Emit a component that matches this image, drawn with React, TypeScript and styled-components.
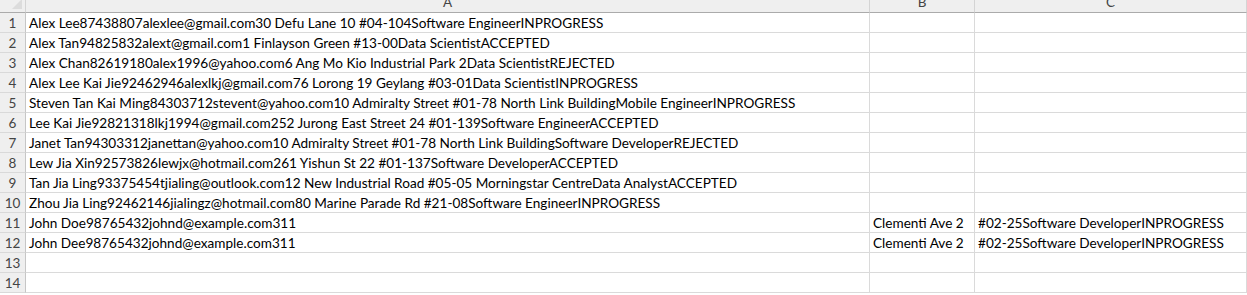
import React from "react";
import styled, { createGlobalStyle } from "styled-components";

const Global = createGlobalStyle`
  html, body { margin: 0; padding: 0; background: #ffffff; overflow: hidden; }
  #root { width: 1247px; height: 295px; overflow: hidden; }
`;

const Sheet = styled.div`
  display: grid;
  grid-template-columns: 26px 844px 105px 1fr;
  grid-auto-rows: 20px;
  grid-template-rows: 13px;
  width: 1247px;
  font-family: "Lato", "Liberation Sans", sans-serif;
  font-size: 13.6px;
  color: #000;
`;

const Corner = styled.div`
  background: #efefef;
  border-right: 1px solid #d4d4d4;
  border-bottom: 1px solid #ababab;
  box-sizing: border-box;
  display: flex;
  justify-content: flex-end;
  align-items: flex-end;
  padding: 0 3px 3px 0;
`;

const ColHead = styled.div`
  background: #efefef;
  border-right: 1px solid #d4d4d4;
  border-bottom: 1px solid #ababab;
  box-sizing: border-box;
  overflow: hidden;
  display: flex;
  justify-content: center;
  align-items: flex-end;
  color: #444;
  font-size: 13.5px;
  line-height: 18px;
`;

const ColLabel = styled.span`
  margin-bottom: 1px;
`;

const RowHead = styled.div`
  background: #efefef;
  border-right: 1px solid #c6c6c6;
  border-bottom: 1px solid #d9d9d9;
  box-sizing: border-box;
  color: #444;
  display: flex;
  align-items: center;
  justify-content: center;
  font-size: 13.5px;
`;

const Cell = styled.div<{ $over?: boolean }>`
  border-right: 1px solid #dadada;
  border-bottom: 1px solid #dadada;
  box-sizing: border-box;
  white-space: nowrap;
  overflow: visible;
  display: flex;
  align-items: center;
  padding-left: 3px;
  position: relative;
  z-index: ${(p) => (p.$over ? 1 : 0)};
`;

const rows: Array<[string, string, string]> = [
  ["Alex Lee87438807alexlee@gmail.com30 Defu Lane 10 #04-104Software EngineerINPROGRESS", "", ""],
  ["Alex Tan94825832alext@gmail.com1 Finlayson Green #13-00Data ScientistACCEPTED", "", ""],
  ["Alex Chan82619180alex1996@yahoo.com6 Ang Mo Kio Industrial Park 2Data ScientistREJECTED", "", ""],
  ["Alex Lee Kai Jie92462946alexlkj@gmail.com76 Lorong 19 Geylang #03-01Data ScientistINPROGRESS", "", ""],
  ["Steven Tan Kai Ming84303712stevent@yahoo.com10 Admiralty Street #01-78 North Link BuildingMobile EngineerINPROGRESS", "", ""],
  ["Lee Kai Jie92821318lkj1994@gmail.com252 Jurong East Street 24 #01-139Software EngineerACCEPTED", "", ""],
  ["Janet Tan94303312janettan@yahoo.com10 Admiralty Street #01-78 North Link BuildingSoftware DeveloperREJECTED", "", ""],
  ["Lew Jia Xin92573826lewjx@hotmail.com261 Yishun St 22 #01-137Software DeveloperACCEPTED", "", ""],
  ["Tan Jia Ling93375454tjialing@outlook.com12 New Industrial Road #05-05 Morningstar CentreData AnalystACCEPTED", "", ""],
  ["Zhou Jia Ling92462146jialingz@hotmail.com80 Marine Parade Rd #21-08Software EngineerINPROGRESS", "", ""],
  ["John Doe98765432johnd@example.com311", "Clementi Ave 2", "#02-25Software DeveloperINPROGRESS"],
  ["John Dee98765432johnd@example.com311", "Clementi Ave 2", "#02-25Software DeveloperINPROGRESS"],
  ["", "", ""],
  ["", "", ""],
];

const CornerMark = () => (
  <svg width="10" height="10" viewBox="0 0 10 10">
    <polygon points="10,0 10,10 0,10" fill="#dcdcdc" />
  </svg>
);

export default function App() {
  return (
    <>
      <Global />
      <Sheet>
        <Corner>
          <CornerMark />
        </Corner>
        <ColHead><ColLabel>A</ColLabel></ColHead>
        <ColHead><ColLabel>B</ColLabel></ColHead>
        <ColHead><ColLabel>C</ColLabel></ColHead>
        {rows.map((r, i) => (
          <React.Fragment key={i}>
            <RowHead>{i + 1}</RowHead>
            <Cell $over>{r[0]}</Cell>
            <Cell>{r[1]}</Cell>
            <Cell>{r[2]}</Cell>
          </React.Fragment>
        ))}
      </Sheet>
    </>
  );
}
